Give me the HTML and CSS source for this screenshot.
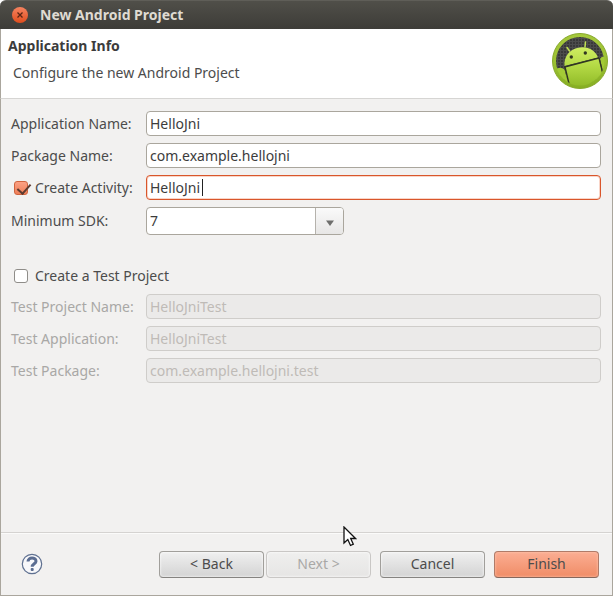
FILE: index.html
```html
<!DOCTYPE html>
<html lang="en">
<head>
<meta charset="utf-8">
<title>New Android Project</title>
<link rel="stylesheet" href="styles.css">
</head>
<body>
<div class="window">
  <header class="titlebar">
    <button class="close" type="button" aria-label="Close">
      <svg width="16" height="16" viewBox="0 0 16 16"><path d="M5.5 5.5l5 5M10.5 5.5l-5 5" stroke="#5a2413" stroke-width="1.3"/></svg>
    </button>
    <span class="window-title">New Android Project</span>
  </header>

  <section class="banner">
    <div class="banner-text">
      <h1>Application Info</h1>
      <p>Configure the new Android Project</p>
    </div>
    <svg class="logo" width="56" height="56" viewBox="0 0 56 56" aria-hidden="true">
      <defs>
        <linearGradient id="ring" x1="0" y1="0" x2="0" y2="1"><stop offset="0" stop-color="#a6c93c"/><stop offset=".5" stop-color="#9cc233"/><stop offset="1" stop-color="#86ae22"/></linearGradient>
        <linearGradient id="droid" gradientUnits="userSpaceOnUse" x1="0" y1="14" x2="0" y2="54"><stop offset="0" stop-color="#d0ee62"/><stop offset=".5" stop-color="#b2d843"/><stop offset="1" stop-color="#8fb927"/></linearGradient>
        <pattern id="mesh" width="3" height="3" patternUnits="userSpaceOnUse"><rect width="3" height="3" fill="#4c4c4c"/><rect width="2" height="2" fill="#393939"/></pattern>
        <clipPath id="disc"><circle cx="28" cy="28" r="24.500"/></clipPath>
      </defs>
      <circle cx="28" cy="28" r="27.500" fill="url(#ring)" stroke="#87a82d"/>
      <circle cx="28" cy="28" r="24" fill="url(#mesh)"/>
      <g clip-path="url(#disc)">
        <path d="M13 34L47 25L54 58H16Z" fill="url(#droid)"/>
        <path d="M12.500 33C11.500 24 17 17 25 15C35 12.500 43 17 46 24.500Z" fill="url(#droid)"/>
        <path d="M3 37Q8 33 12.500 36.500L18 58H2ZM48 26Q50 22 54 25V46H52.500Z" fill="#a3cb36"/>
        <path d="M12.500 34L47 25" stroke="#303621" stroke-width="1.300"/>
        <path d="M13 34L17.300 52M47 25L51.500 43" stroke="#303621" stroke-width="1.400"/>
      </g>
      <path d="M17.500 18L15 14.500M33 14L33.500 9" stroke="#c0e152" stroke-width="1.500" stroke-linecap="round"/>
      <circle cx="19.300" cy="24" r="1.700" fill="#303621"/><circle cx="33.300" cy="20" r="1.700" fill="#303621"/>
    </svg>
  </section>

  <form class="dialog">
    <div class="fields">
      <div class="grid">
        <label for="app">Application Name:</label>
        <input class="text" id="app" type="text" value="HelloJni">
        <label for="pkg">Package Name:</label>
        <input class="text" id="pkg" type="text" value="com.example.hellojni">
        <label class="check-label"><input class="check" type="checkbox" checked>Create Activity:</label>
        <div class="active-field">
          <input class="text active" type="text" aria-label="Activity" value="HelloJni">
          <span class="caret"></span>
        </div>
        <label for="sdk">Minimum SDK:</label>
        <div class="combo">
          <select id="sdk"><option>7</option></select>
          <span class="combo-arrow"><svg width="8" height="6" viewBox="0 0 8 6"><path d="M0 .5h8L4 6Z" fill="#6e6e6c"/></svg></span>
        </div>
      </div>

      <label class="check-label test-toggle"><input class="check" type="checkbox">Create a Test Project</label>

      <div class="grid disabled">
        <label for="tname">Test Project Name:</label>
        <input class="text" id="tname" type="text" value="HelloJniTest" disabled>
        <label for="tapp">Test Application:</label>
        <input class="text" id="tapp" type="text" value="HelloJniTest" disabled>
        <label for="tpkg">Test Package:</label>
        <input class="text" id="tpkg" type="text" value="com.example.hellojni.test" disabled>
      </div>
    </div>

    <footer class="actions">
      <button class="help" type="button" aria-label="Help">
        <svg width="22" height="22" viewBox="0 0 22 22"><circle cx="11" cy="11" r="9.700" fill="#f8f8fa" stroke="#5f7191" stroke-width="1.200"/><path d="M7 8.500C7 3.900 15 4 15 8.200C15 10.800 11.200 10.800 11.200 13.800" fill="none" stroke="#5b6d91" stroke-width="3"/><rect x="9.700" y="15" width="3" height="3" rx="1" fill="#5b6d91"/></svg>
      </button>
      <div class="steps">
        <button class="btn" type="button">&lt; Back</button>
        <button class="btn" type="button" disabled>Next &gt;</button>
      </div>
      <button class="btn" type="button">Cancel</button>
      <button class="btn primary" type="button">Finish</button>
    </footer>
  </form>
  <svg class="pointer" width="14" height="21" viewBox="0 0 14 21" aria-hidden="true"><path d="M1 1V17L4.800 13.500L7.500 19.500L10.300 18.200L7.700 12.500H12.500Z" fill="#fff" stroke="#111" stroke-width="1.300"/></svg>
</div>
</body>
</html>
```
FILE: styles.css
```css
* {
  box-sizing: border-box;
}

body {
  margin: 0;
  background: #fff;
  color: #4c4c4c;
  font: 14px/20px "Noto Sans", "Open Sans", sans-serif;
}

button,
input,
select {
  font: inherit;
  color: inherit;
}

.window {
  position: relative;
  display: flex;
  flex-direction: column;
  min-height: 100vh;
}

.titlebar {
  display: flex;
  align-items: center;
  gap: 12px;
  height: 29px;
  padding: 0 12px;
  border-top: 1px solid #5f5e58;
  border-radius: 6px 6px 0 0;
  background: linear-gradient(#504f49, #3d3c38);
}

.close {
  display: flex;
  width: 16px;
  height: 16px;
  padding: 0;
  border: 0;
  border-radius: 50%;
  background: linear-gradient(#f58360, #df4d1d);
}

.window-title {
  color: #dfdbd2;
  font-weight: 700;
}

.banner {
  display: flex;
  justify-content: space-between;
  height: 70px;
  padding: 4px 4px 0 7px;
  border: solid #aaa69d;
  border-width: 0 1px;
  border-bottom: 1px solid #d6d5d3;
  background: #fff;
}

.banner-text {
  padding-top: 3px;
}

.banner h1 {
  margin: 0;
  color: #3c3c3c;
  font-size: 14px;
  line-height: 20px;
}

.banner p {
  margin: 7px 0 0 5px;
}

.dialog {
  display: flex;
  flex: 1;
  flex-direction: column;
  border: 1px solid #aaa69d;
  border-top: 0;
  background: #f2f1f0;
}

.fields {
  flex: 1;
  padding: 12px 11px 0 10px;
}

.grid {
  display: grid;
  grid-template-columns: 127px 1fr;
  gap: 7px 8px;
  align-items: center;
  white-space: nowrap;
}

.text {
  display: block;
  width: 100%;
  height: 25px;
  padding: 0 3px;
  border: 1px solid #aaa69d;
  border-radius: 4px;
  outline: 0;
  background: #fff;
  color: #3c3c3c;
}

.active-field {
  position: relative;
}

.text.active {
  border-color: #d9562b;
  box-shadow: inset 0 0 0 1px #f9d5c8;
}

.caret {
  position: absolute;
  top: 4px;
  left: 56px;
  width: 1px;
  height: 17px;
  background: #222;
}

.disabled {
  color: #a9a8a6;
}

.text:disabled {
  border-color: #cfcdca;
  background: #ebeae9;
  color: #bfbbb7;
}

.check-label {
  display: flex;
  align-items: center;
  gap: 7px;
  padding-left: 3px;
}

.check {
  appearance: none;
  flex: none;
  width: 14px;
  height: 14px;
  margin: 0;
  border: 1px solid #8f8d89;
  border-radius: 3px;
  background: #fff;
}

.check:checked {
  position: relative;
  border-color: #d0643e;
  background: linear-gradient(#fba184, #ef7f58);
}

.check:checked::after {
  content: "";
  position: absolute;
  top: -1px;
  left: 5px;
  width: 6px;
  height: 11px;
  border: solid #5d3b30;
  border-width: 0 2px 2px 0;
  transform: rotate(42deg);
}

.test-toggle {
  margin: 31px 0 8px;
}

.combo {
  display: flex;
  width: 198px;
  height: 28px;
  position: relative;
}

.combo select {
  appearance: none;
  width: 100%;
  padding: 0 32px 0 3px;
  border: 1px solid #aaa69d;
  border-radius: 4px;
  background: #fff;
  color: #3c3c3c;
}

.combo-arrow {
  position: absolute;
  top: 1px;
  right: 1px;
  bottom: 1px;
  display: flex;
  align-items: center;
  justify-content: center;
  width: 28px;
  padding-top: 3px;
  border-left: 1px solid #b5b2ac;
  border-radius: 0 3px 3px 0;
  background: linear-gradient(#fafafa, #e7e6e5);
  pointer-events: none;
}

.actions {
  display: flex;
  align-items: center;
  gap: 9px;
  height: 63px;
  padding: 0 13px 0 20px;
  border-top: 1px solid #d5d3d1;
  box-shadow: inset 0 1px #fbfbfa;
}

.help {
  display: flex;
  margin-right: auto;
  padding: 0;
  border: 0;
  background: none;
}

.steps {
  display: flex;
  gap: 2px;
}

.btn {
  width: 105px;
  height: 27px;
  padding: 0;
  border: 1px solid #a19f9b;
  border-bottom-color: #858380;
  border-radius: 4px;
  background: linear-gradient(#f0f0f0, #d3d3d3);
  box-shadow: inset 0 0 2px 1px #ffffff80;
}

.btn:disabled {
  border-color: #c9c7c5;
  background: linear-gradient(#efefee, #e6e5e4);
  color: #a9a8a6;
}

.primary {
  border-color: #b07b68;
  border-bottom-color: #85675c;
  background: linear-gradient(#fbae93, #f08c66);
  box-shadow: inset 0 0 2px 1px #ffc5ae80;
}

.pointer {
  position: absolute;
  top: 526px;
  left: 343px;
}
```
